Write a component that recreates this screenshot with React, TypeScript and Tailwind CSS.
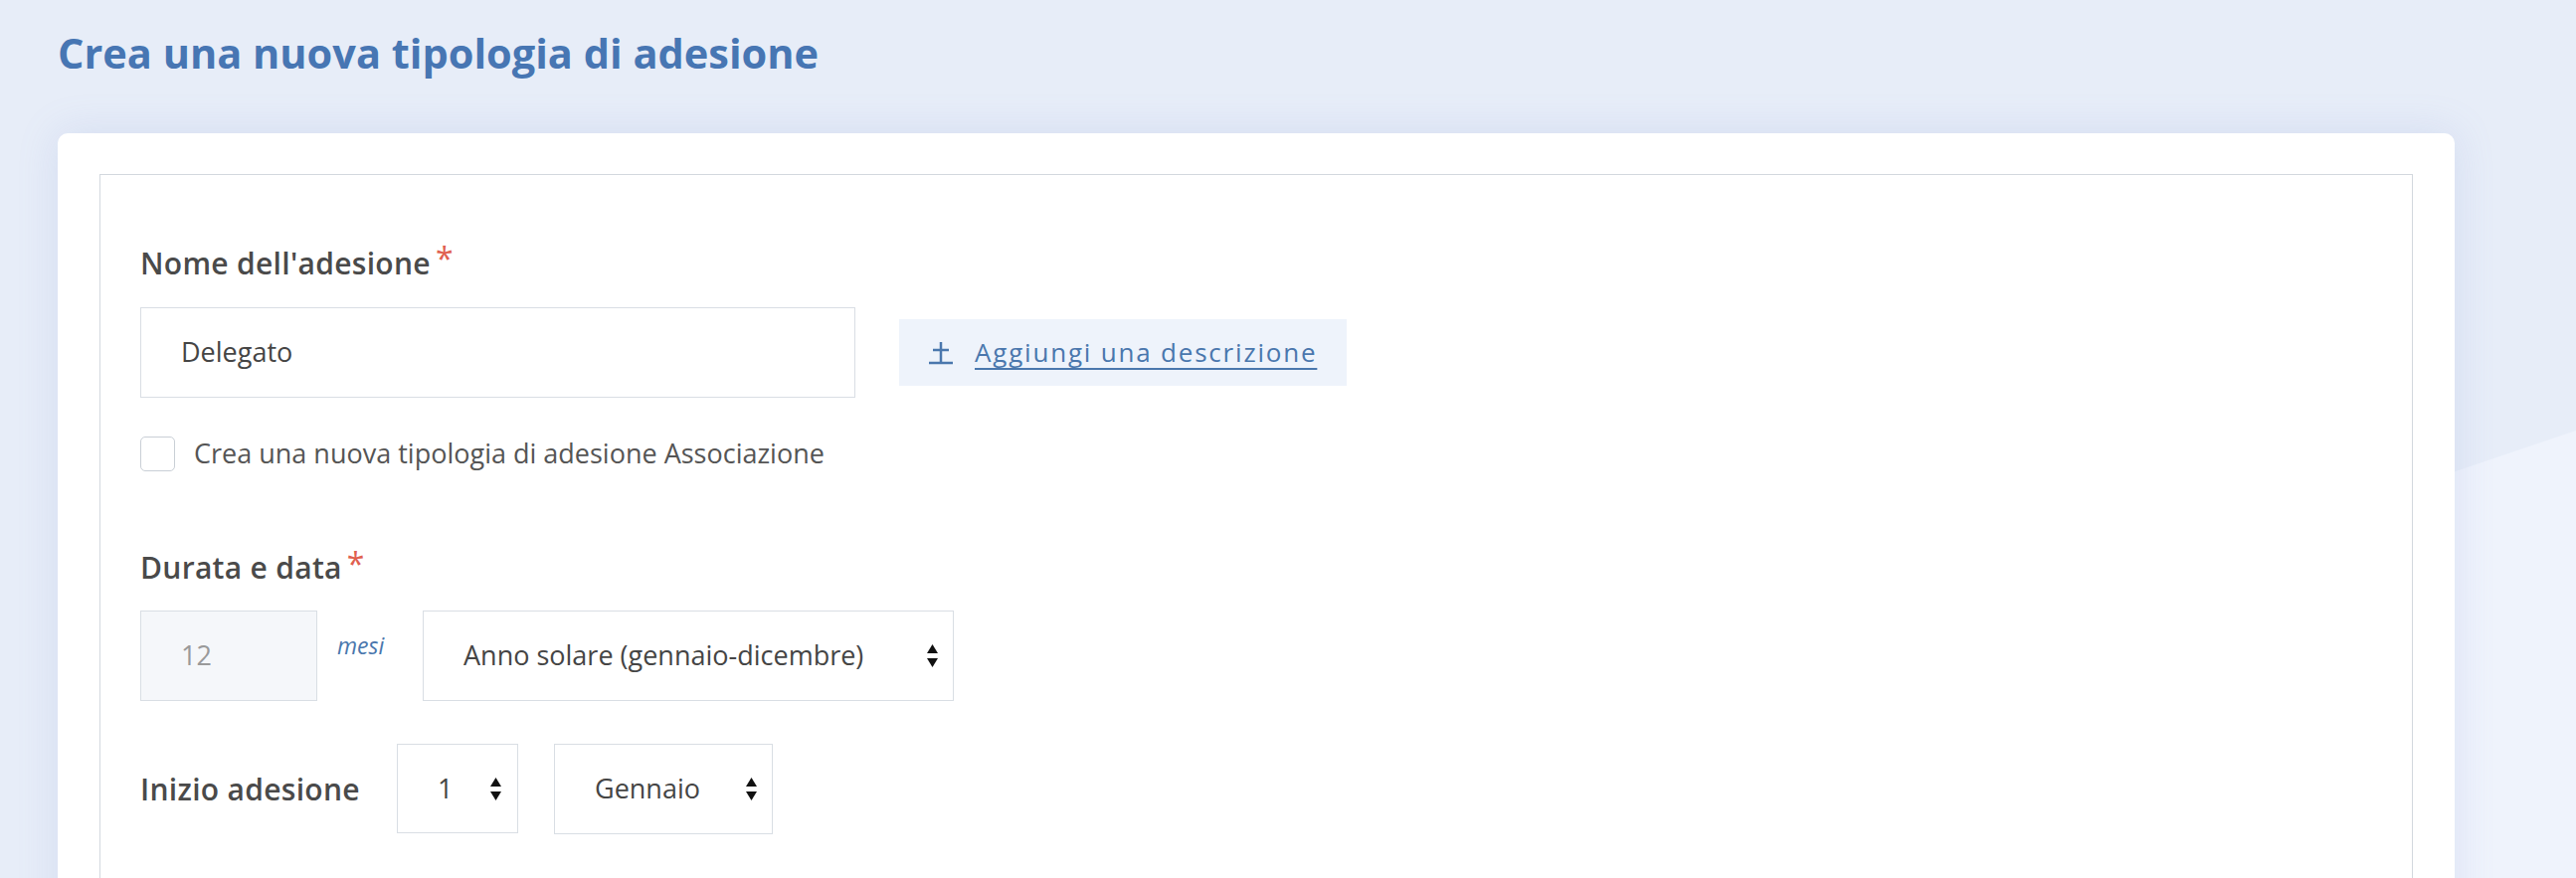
import React from "react";

const font = { fontFamily: "'Open Sans', 'Noto Sans', sans-serif" };

const SortArrows = () => (
  <svg width="11" height="23" viewBox="0 0 11 23" className="shrink-0">
    <path d="M0 9 L5.5 0 L11 9 Z" fill="#111" />
    <path d="M0 14 L11 14 L5.5 23 Z" fill="#111" />
  </svg>
);

const PlusBase = () => (
  <svg width="26" height="24" viewBox="0 0 26 24" className="shrink-0">
    <path d="M13 1 V22 M5 9 H21 M1 22 H25" stroke="#4a77ad" strokeWidth="2.5" fill="none" />
  </svg>
);

const Label = ({ children }: { children: React.ReactNode }) => (
  <div className="h-[36px] flex items-center text-[30px] tracking-[0.3px] font-semibold text-[#4a4a4a]">
    {children}
    <span className="text-[#e0604f] ml-[5px] -mt-[8px] text-[32px] font-normal leading-none">*</span>
  </div>
);

const Select = ({ value, width }: { value: string; width: string }) => (
  <div
    className={`${width} h-[91px] border border-[#d9dee4] bg-white flex items-center justify-between pl-[40px] pr-[15px] text-[27px] text-[#454545]`}
  >
    <span>{value}</span>
    <SortArrows />
  </div>
);

export default function App() {
  return (
    <div className="relative w-full h-[883px] overflow-hidden bg-[#e7edf8]" style={font}>
      {/* lighter lower-right backdrop */}
      <svg className="absolute inset-0 w-full h-full" viewBox="0 0 2590 883" preserveAspectRatio="none">
        <polygon points="0,1311 2590,433 2590,883 0,883" fill="#eff3fc" />
      </svg>

      <div className="relative pl-[58px] pt-[29px]">
        <h1 className="h-[48px] flex items-center text-[41.5px] font-bold text-[#4776b3]">
          Crea una nuova tipologia di adesione
        </h1>

        <div className="mt-[57px] w-[2410px] bg-white rounded-[10px] px-[42px] pt-[41px] shadow-[0_0_40px_rgba(120,145,210,0.18)]">
          <div className="border border-[#d3d8de] pl-[40px] pt-[70px] pb-[200px]">
            <Label>Nome dell'adesione</Label>

            <div className="mt-[27px] flex items-center gap-[44px]">
              <div className="w-[719px] h-[91px] border border-[#d9dee4] flex items-center pl-[40px] text-[27px] text-[#454545]">
                Delegato
              </div>
              <button className="h-[67px] bg-[#eef3fb] flex items-center pl-[29px] pr-[30px] gap-[21px]">
                <PlusBase />
                <span className="text-[26px] tracking-[1.8px] text-[#4a77ad] underline underline-offset-[6px] decoration-[2px]">
                  Aggiungi una descrizione
                </span>
              </button>
            </div>

            <div className="mt-[36px] flex items-center gap-[19px]">
              <div className="w-[35px] h-[35px] rounded-[5px] border border-[#c9cfd6] bg-white" />
              <span className="text-[27px] text-[#555]">
                Crea una nuova tipologia di adesione Associazione
              </span>
            </div>

            <div className="mt-[76px]">
              <Label>Durata e data</Label>
            </div>

            <div className="mt-[25px] flex items-start">
              <div className="w-[178px] h-[91px] border border-[#d9dee4] bg-[#f5f7fa] flex items-center pl-[40px] text-[27px] text-[#9a9a9a]">
                12
              </div>
              <span className="ml-[20px] mt-[18px] w-[86px] italic text-[23px] text-[#4a77ad]">mesi</span>
              <Select value="Anno solare (gennaio-dicembre)" width="w-[534px]" />
            </div>

            <div className="mt-[43px] flex items-center">
              <span className="w-[258px] text-[30px] tracking-[0.3px] font-semibold text-[#4a4a4a]">Inizio adesione</span>
              <div className="w-[122px] h-[90px] border border-[#d9dee4] bg-white flex items-center justify-between pl-[40px] pr-[16px] text-[27px] text-[#454545]">
                <span>1</span>
                <SortArrows />
              </div>
              <div className="ml-[36px]">
                <Select value="Gennaio" width="w-[220px]" />
              </div>
            </div>
          </div>
        </div>
      </div>
    </div>
  );
}
